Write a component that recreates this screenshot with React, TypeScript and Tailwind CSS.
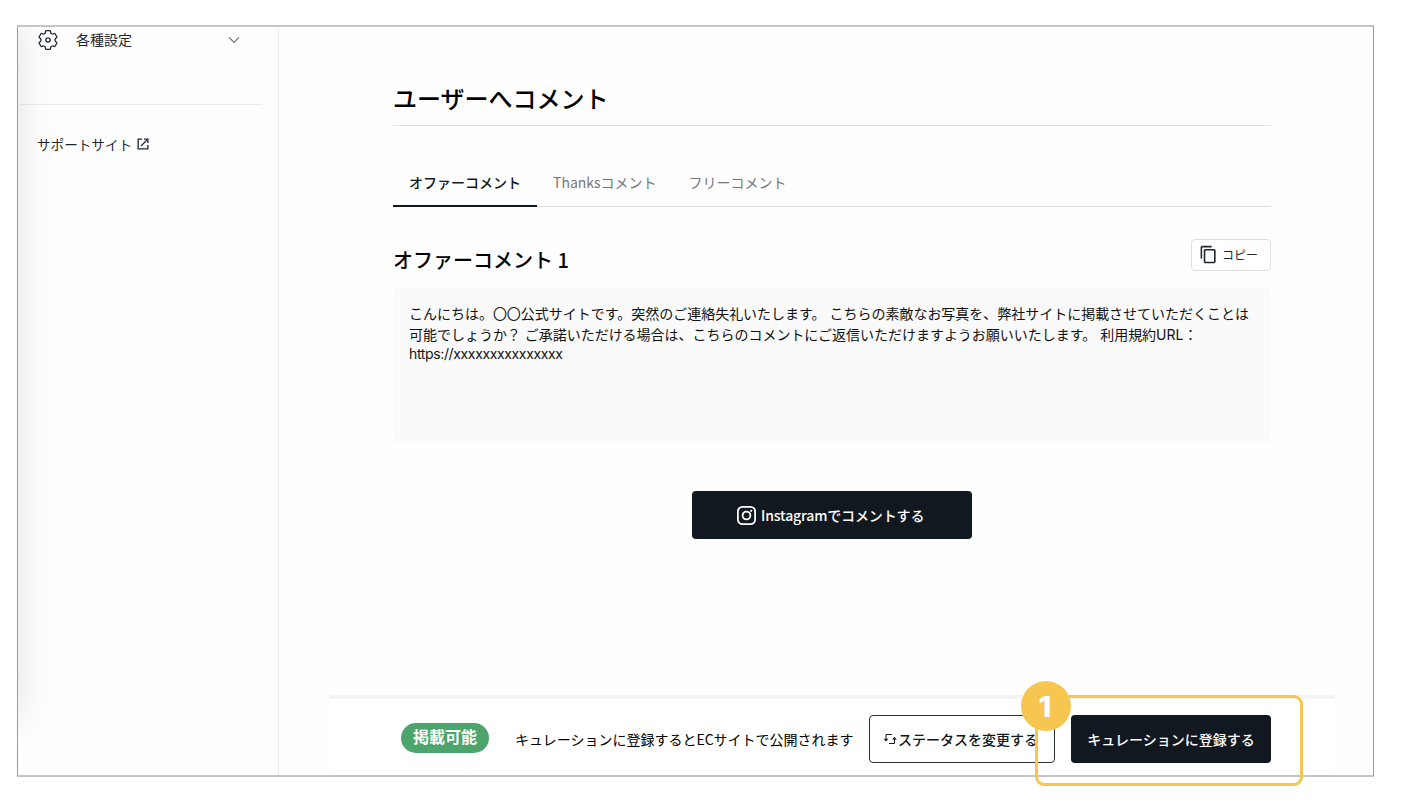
import { MdContentCopy } from 'react-icons/md';

const tabs = [
  { label: 'オファーコメント', active: true },
  { label: 'Thanksコメント', active: false },
  { label: 'フリーコメント', active: false },
];

const commentLines = [
  'こんにちは。〇〇公式サイトです。突然のご連絡失礼いたします。 こちらの素敵なお写真を、弊社サイトに掲載させていただくことは',
  '可能でしょうか？ ご承諾いただける場合は、こちらのコメントにご返信いただけますようお願いいたします。 利用規約URL：',
  'https://xxxxxxxxxxxxxxx',
];

function GearIcon() {
  return (
    <svg className="-mt-px" width="24" height="24" viewBox="0 0 24 24" fill="none" stroke="currentColor" strokeWidth="1.3" strokeLinejoin="round">
      <path d="M10.3 2.7H13.7Q14.4 2.7 14.5 3.4L14.6 4.5Q14.8 5.4 15.5 5.8Q16.4 6.3 17.1 6L18.1 5.5Q18.7 5.3 19.1 5.8L20.8 8.8Q21.1 9.4 20.6 9.8L19.7 10.4Q19 10.9 19 12Q19 13.1 19.7 13.6L20.6 14.2Q21.1 14.6 20.8 15.2L19.1 18.2Q18.7 18.7 18.1 18.5L17.1 18Q16.4 17.7 15.5 18.2Q14.8 18.6 14.6 19.5L14.5 20.6Q14.4 21.3 13.7 21.3H10.3Q9.6 21.3 9.5 20.6L9.4 19.5Q9.2 18.6 8.5 18.2Q7.6 17.7 6.9 18L5.9 18.5Q5.3 18.7 4.9 18.2L3.2 15.2Q2.9 14.6 3.4 14.2L4.3 13.6Q5 13.1 5 12Q5 10.9 4.3 10.4L3.4 9.8Q2.9 9.4 3.2 8.8L4.9 5.8Q5.3 5.3 5.9 5.5L6.9 6Q7.6 6.3 8.5 5.8Q9.2 5.4 9.4 4.5L9.5 3.4Q9.6 2.7 10.3 2.7Z" />
      <circle cx="12" cy="12" r="2.1" />
    </svg>
  );
}

function ChevronIcon() {
  return (
    <svg className="-mt-px text-[#6b7078]" width="12" height="8" viewBox="0 0 12 8" fill="none" stroke="currentColor" strokeWidth="1.1">
      <path d="M1 1.4L6 6.4L11 1.4" />
    </svg>
  );
}

function ExternalIcon() {
  return (
    <svg className="-mt-0.5" width="12" height="12" viewBox="0 0 12 12" fill="none" stroke="currentColor" strokeWidth="1.3">
      <path d="M5 1.15H1.15V10.85H10.85V7" />
      <path d="M7 1.15H10.85V5" />
      <path d="M10.6 1.4L4 8" />
    </svg>
  );
}

function InstagramIcon() {
  return (
    <svg className="mt-px" width="19" height="19" viewBox="0 0 19 19" fill="none" stroke="currentColor" strokeWidth="1.8">
      <rect x="0.9" y="0.9" width="17.2" height="17.2" rx="4.6" />
      <circle cx="9.5" cy="9.5" r="3.9" />
      <circle cx="14.2" cy="4.8" r="1.1" fill="currentColor" stroke="none" />
    </svg>
  );
}

function SwapIcon() {
  return (
    <svg width="14" height="12" viewBox="0 0 14 12" fill="none" stroke="currentColor" strokeWidth="1">
      <path d="M8.8 1.5H3V6.5" />
      <path d="M6 10.5H11.5V5.5" />
      <path d="M0.6 5.8H5.4L3 8.4Z" fill="currentColor" stroke="none" />
      <path d="M9.1 6.4H13.9L11.5 3.8Z" fill="currentColor" stroke="none" />
    </svg>
  );
}

function Sidebar() {
  return (
    <aside className="relative w-[261px] shrink-0 overflow-hidden border-r border-[#ececec] text-sm text-[#1f2630]">
      {/* soft shadow coming in from the left edge */}
      <div className="absolute top-[-4px] left-[-60px] h-[696px] w-[60px] shadow-[0_0_42px_rgba(0,0,0,0.12)]" />
      <div className="flex h-[27px] items-center pr-[38px] pl-[18px]">
        <GearIcon />
        <span className="ml-4 flex-1 pb-[3px]">各種設定</span>
        <ChevronIcon />
      </div>
      <div className="mt-[50px] mr-4 ml-0.5 border-t border-[#ececec]" />
      <a className="mt-[30px] ml-[19px] flex h-5 items-center gap-[5px] text-[13.6px]">
        サポートサイト
        <ExternalIcon />
      </a>
    </aside>
  );
}

function ActionBar() {
  return (
    <div className="mt-auto mr-[38px] ml-[50px] flex h-20 border-t-4 border-[#f4f4f4] bg-white pt-4 pr-16 pl-[72px]">
      <span className="mt-2 flex h-[30px] w-[88px] items-center justify-center rounded-full bg-[#4ba56c] pb-1 text-base font-bold text-white">
        掲載可能
      </span>
      <p className="ml-[26px] flex h-12 w-[354px] items-center pb-px text-sm whitespace-nowrap text-black">
        キュレーションに登録するとECサイトで公開されます
      </p>
      <button className="flex h-12 w-[186px] items-center rounded border border-[#2b323b] pl-[13px] text-sm font-medium whitespace-nowrap text-[#111820]">
        <SwapIcon />
        <span className="ml-px pb-px">ステータスを変更する</span>
      </button>
      <button className="ml-4 h-12 w-[200px] rounded bg-[#111820] pb-px text-sm font-medium text-white">
        キュレーションに登録する
      </button>
    </div>
  );
}

export default function App() {
  return (
    <div className="relative h-[810px] w-[1402px] overflow-hidden bg-white pt-[25px] pl-[17px] font-['Noto_Sans_CJK_JP',sans-serif]">
      <div className="flex h-[752px] w-[1357px] border-x border-y-2 border-x-[#999] border-y-[#c6c6c6] bg-[#fefefe]">
        <Sidebar />
        <main className="flex flex-1 flex-col">
          <div className="ml-[114px] w-[878px]">
            <h1 className="border-b border-[#dfdfdf] pt-[53px] pb-[9px] text-2xl leading-9 font-medium text-black">
              ユーザーへコメント
            </h1>

            <div className="mt-[33px] flex h-12 border-b border-[#dfdfdf] text-sm">
              {tabs.map((tab) => (
                <button
                  key={tab.label}
                  className={
                    tab.active
                      ? 'h-12 border-b-2 border-[#111820] px-4 font-medium text-[#111820]'
                      : 'h-12 px-4 pb-0.5 text-[#777]'
                  }
                >
                  {tab.label}
                </button>
              ))}
            </div>

            <div className="mt-8 flex h-8 justify-between">
              <h2 className="pt-[7px] text-xl leading-7 font-medium text-black">オファーコメント 1</h2>
              <button className="flex h-8 w-20 items-center rounded border border-[#dfdfdf] bg-white pl-[7px] text-xs text-[#1f2630]">
                <MdContentCopy className="-mt-px size-[19px]" />
                <span className="ml-1">コピー</span>
              </button>
            </div>

            <div className="mt-4 h-[156px] rounded-lg bg-[#fafafa] px-4 pt-4 font-['Inter','Noto_Sans_CJK_JP',sans-serif] text-sm tracking-[-0.02px] text-[#111]">
              {commentLines.map((line) => (
                <p key={line} className="h-[21px] leading-[21px] whitespace-nowrap last:-mt-0.5 last:tracking-[-0.36px]">
                  {line}
                </p>
              ))}
            </div>

            <button className="mx-auto mt-12 flex h-12 w-[280px] items-center rounded bg-[#111820] pl-[45px] text-sm font-medium text-white">
              <InstagramIcon />
              <span className="ml-[5px] tracking-[-0.13px]">Instagramでコメントする</span>
            </button>
          </div>
          <ActionBar />
        </main>
      </div>

      {/* step callout */}
      <div className="absolute top-[695px] left-[1035px] h-[91px] w-[268px] rounded-[9px] border-3 border-[#f6c650]" />
      <div className="absolute top-[681px] left-[1021px] flex size-[50px] items-center justify-center rounded-full bg-[#f6c650] pt-0.5 pr-0.5 font-['Inter',sans-serif] text-[29px] font-extrabold text-white">
        1
      </div>
    </div>
  );
}
